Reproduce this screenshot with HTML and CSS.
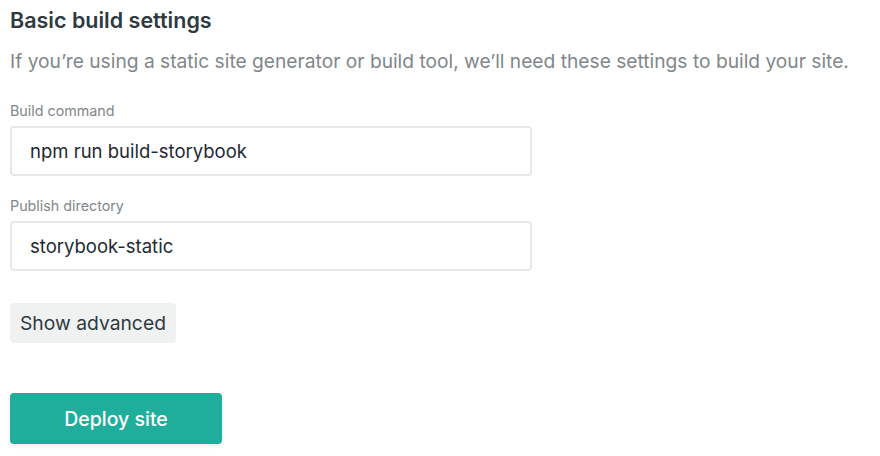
FILE: index.html
```html
<!DOCTYPE html>
<html>
<head>
<meta charset="utf-8">
<link rel="stylesheet" href="styles.css">
</head>
<body>
<section class="settings">
  <h2 class="title">Basic build settings</h2>
  <p class="desc">If you’re using a static site generator or build tool, we’ll need these settings to build your site.</p>
  <div class="field">
    <label class="label">Build command</label>
    <div class="input">npm run build-storybook</div>
  </div>
  <div class="field">
    <label class="label">Publish directory</label>
    <div class="input">storybook-static</div>
  </div>
  <button class="btn-secondary">Show advanced</button>
  <button class="btn-primary">Deploy site</button>
</section>
</body>
</html>
```
FILE: styles.css
```css
html, body { margin: 0; padding: 0; background: #fff; }
body { font-family: Inter, "Noto Sans", sans-serif; }
.settings { padding: 5px 10px; display: flex; flex-direction: column; align-items: flex-start; }
.title { margin: 0; font-size: 21.5px; font-weight: 600; color: #2e3a40; line-height: 30px; }
.desc { margin: 13px 0 0; font-size: 19.2px; color: #7f878b; line-height: 26px; }
.field { display: flex; flex-direction: column; }
.label { font-size: 14.3px; color: #7f878b; line-height: 20px; margin-top: 27px; }
.field + .field .label { margin-top: 20px; }
.input { box-sizing: border-box; width: 522px; height: 50px; margin-top: 5px; border: 2px solid #e6e9ea; border-radius: 4px; padding: 0 18px; display: flex; align-items: center; font-size: 18.5px; color: #1e2a32; }
.btn-secondary { margin-top: 32px; box-sizing: border-box; height: 40px; padding: 0 10px; border: none; border-radius: 4px; background: #f0f1f1; font-family: inherit; font-size: 19.3px; color: #2e3a40; }
.btn-primary { margin-top: 50px; box-sizing: border-box; width: 212px; height: 51px; border: none; border-radius: 4px; background: #20ae9c; font-family: inherit; font-size: 19.5px; font-weight: 500; color: #fff; box-shadow: 0 2px 4px rgba(0,0,0,0.08); }
```
